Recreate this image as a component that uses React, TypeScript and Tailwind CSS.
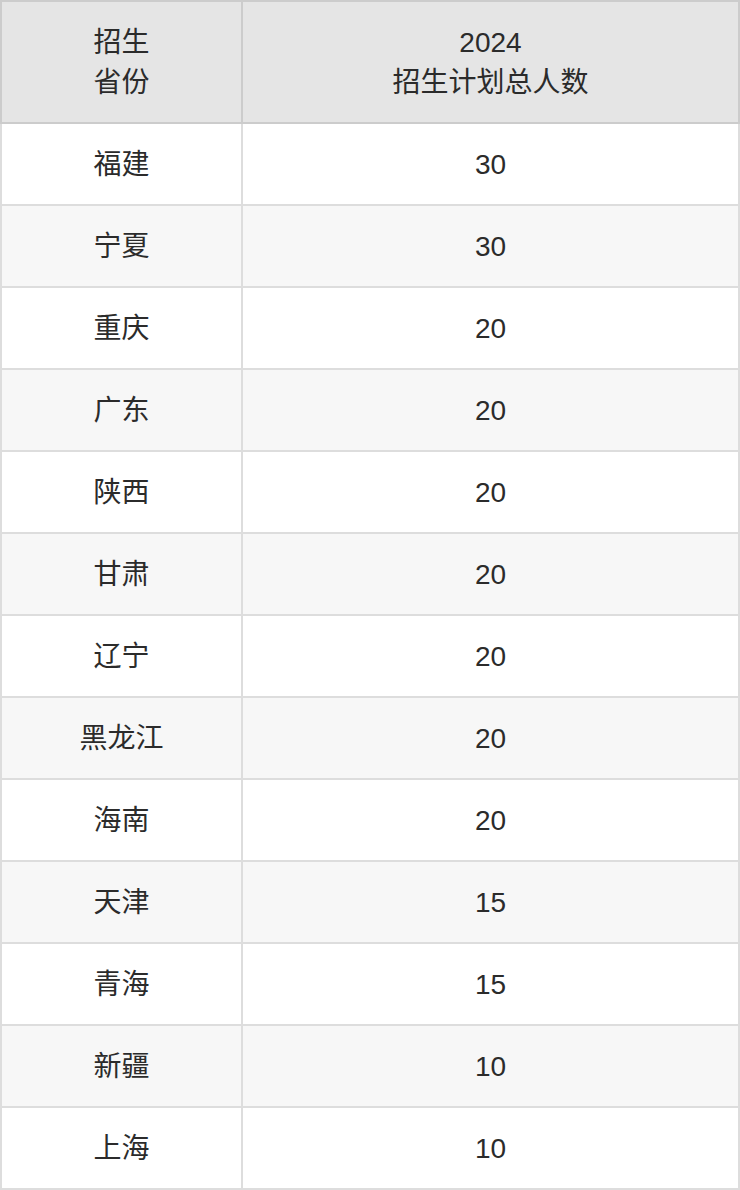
const rows: [string, string][] = [
  ["福建", "30"],
  ["宁夏", "30"],
  ["重庆", "20"],
  ["广东", "20"],
  ["陕西", "20"],
  ["甘肃", "20"],
  ["辽宁", "20"],
  ["黑龙江", "20"],
  ["海南", "20"],
  ["天津", "15"],
  ["青海", "15"],
  ["新疆", "10"],
  ["上海", "10"],
];

export default function App() {
  return (
    <div
      className="w-[740px] bg-white text-[28px] text-[#2b2b2b]"
      style={{ fontFamily: '"Liberation Sans", "Noto Sans CJK SC", sans-serif' }}
    >
      {/* header */}
      <div className="flex h-[124px] border-2 border-[#cccccc] bg-[#e5e5e5] leading-[40px]">
        <div className="flex w-[241px] items-center justify-center border-r-2 border-[#cccccc] pt-[2px] text-center">
          招生
          <br />
          省份
        </div>
        <div className="flex flex-1 items-center justify-center pt-[1px] text-center">
          2024
          <br />
          招生计划总人数
        </div>
      </div>

      {rows.map(([prov, num], i) => (
        <div
          key={prov}
          className={`flex h-[82px] border-x-2 border-b-2 border-[#dddddd] ${i % 2 === 1 ? "bg-[#f7f7f7]" : "bg-white"}`}
        >
          <div className="flex w-[241px] items-center justify-center border-r-2 border-[#dddddd] pt-[1px]">{prov}</div>
          <div className="flex flex-1 items-center justify-center pt-[1px]">{num}</div>
        </div>
      ))}
    </div>
  );
}
